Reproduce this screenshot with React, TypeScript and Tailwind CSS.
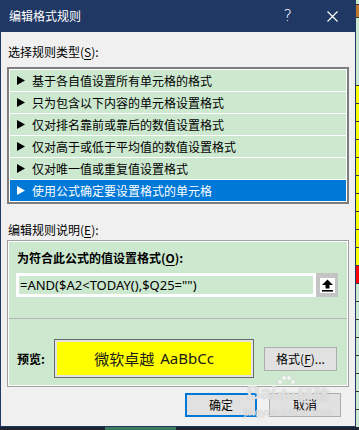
import React from 'react';

const rules = [
  '基于各自值设置所有单元格的格式',
  '只为包含以下内容的单元格设置格式',
  '仅对排名靠前或靠后的数值设置格式',
  '仅对高于或低于平均值的数值设置格式',
  '仅对唯一值或重复值设置格式',
  '使用公式确定要设置格式的单元格',
];

// sheet cells peeking out on the right edge
const cells = [
  { h: 5, c: 'bg-[#cce8cf]' },
  { h: 13, c: 'bg-[#c07a30]' },
  { h: 68, c: 'bg-[#cce8cf]' },
  ...Array.from({ length: 10 }, () => ({ h: 18, c: 'bg-[#ffff00]' })),
  { h: 18, c: 'bg-[#ff0000]' },
  ...Array.from({ length: 7 }, () => ({ h: 18, c: 'bg-[#cce8cf]' })),
];

const Arrow = ({ white }: { white?: boolean }) => (
  <svg width="8" height="9" viewBox="0 0 8 9" className="shrink-0">
    <polygon points="0,0 8,4.5 0,9" fill={white ? '#ffffff' : '#000000'} />
  </svg>
);

const UploadIcon = () => (
  <svg width="13" height="13" viewBox="0 0 13 13">
    <polygon points="6.5,0.5 1,6 4.5,6 4.5,9.5 8.5,9.5 8.5,6 12,6" fill="#000" />
    <rect x="1" y="11" width="11" height="1.6" fill="#000" />
  </svg>
);

const Dialog = () => (
  <div className="w-[356px] h-[427px] flex flex-col bg-[#f0f0f0] border-x border-b border-[#1f3864] text-[12px] text-black">
    <div className="h-[32px] shrink-0 -mx-px bg-[#1f3864] flex items-center pl-[9px] pr-[18px] text-white">
      <span className="leading-none">编辑格式规则</span>
      <span className="ml-auto mr-[35px] text-[16px] leading-none font-['DejaVu_Sans',sans-serif] font-light">?</span>
      <svg width="11" height="11" viewBox="0 0 11 11">
        <path d="M0.5 0.5 L10.5 10.5 M10.5 0.5 L0.5 10.5" stroke="#fff" strokeWidth="1.2" />
      </svg>
    </div>

    <div className="flex flex-col px-[6px] pt-[12px]">
      <div className="h-[16px] leading-[16px] pl-px">
        选择规则类型(<span className="underline underline-offset-2">S</span>):
      </div>

      <div className="mt-[7px] w-[342px] border-2 border-[#7d7d7d] bg-white p-px flex flex-col gap-px">
        {rules.map((r, i) => {
          const active = i === rules.length - 1;
          return (
            <div
              key={r}
              className={`h-[21px] flex items-center gap-[7px] pl-[7px] ${
                active ? 'bg-[#0078d7] text-white' : 'bg-[#cce8cf]'
              }`}
            >
              <Arrow white={active} />
              <span className="leading-none">{r}</span>
            </div>
          );
        })}
      </div>

      <div className="mt-[18px] h-[16px] leading-[16px] pl-px">
        编辑规则说明(<span className="underline underline-offset-2">E</span>):
      </div>

      <div className="mt-[2px] w-[342px] h-[147px] border border-[#a0a0a0]">
        <div className="h-full border border-white bg-[#cce8cf] flex flex-col">
          <div className="pt-[8px] pl-[8px] h-[24px] leading-[16px] font-bold">
            为符合此公式的值设置格式(<span className="underline underline-offset-2">O</span>):
          </div>
          <div className="mt-[7px] ml-[7px] flex h-[24px] w-[322px]">
            <div className="w-[300px] border-[3px] border-white bg-[#cce8cf] flex items-center pl-px font-['Noto_Sans',sans-serif] text-[13px] leading-none">
              =AND($A2&lt;TODAY(),$Q25="")
            </div>
            <div className="w-[22px] bg-[#c4c4c4] flex items-center justify-center">
              <div className="w-[15px] h-[15px] bg-white flex items-center justify-center">
                <UploadIcon />
              </div>
            </div>
          </div>
          <div className="mt-[21px] h-px bg-[#b4b4b4]" />
          <div className="mt-[20px] flex items-center pl-[8px]">
            <span className="w-[37px] font-bold">预览:</span>
            <div className="w-[200px] h-[39px] border border-[#6a6a6a] p-[2px] bg-[#e4e4e4]">
              <div className="h-full bg-[#ffff00] flex items-center justify-center gap-[6px] text-[15px] text-[#1a1a1a] leading-none">
                <span>微软卓越</span>
                <span className="font-['Noto_Sans',sans-serif]">AaBbCc</span>
              </div>
            </div>
            <div className="ml-[10px] w-[73px] h-[24px] border border-[#adadad] bg-[#e1e1e1] flex items-center justify-center">
              格式(<span className="underline underline-offset-2">F</span>)...
            </div>
          </div>
        </div>
      </div>

      <div className="mt-[6px] flex gap-[12px] pl-[178px]">
        <div className="w-[72px] h-[24px] border-2 border-[#0078d7] bg-[#e1e1e1] flex items-center justify-center">
          确定
        </div>
        <div className="w-[72px] h-[24px] border border-[#adadad] bg-[#e1e1e1] flex items-center justify-center">
          取消
        </div>
      </div>
    </div>
  </div>
);

// faint site watermark over the buttons
const Watermark = () => (
  <div className="absolute left-[242px] top-[376px] w-[92px] flex flex-col items-center text-white/60 [text-shadow:0_0_1px_#b0b0b0] pointer-events-none">
    <div className="flex items-end h-[26px]">
      <span className="text-[19px] font-bold leading-none font-['Liberation_Sans',sans-serif]">Bai</span>
      <div className="flex flex-col items-center">
        <svg width="20" height="12" viewBox="0 0 20 12" className="opacity-70">
          <circle cx="4" cy="7" r="2.5" fill="#fff" stroke="#bbb" strokeWidth="0.5" />
          <circle cx="8" cy="3" r="2.5" fill="#fff" stroke="#bbb" strokeWidth="0.5" />
          <circle cx="13" cy="3" r="2.5" fill="#fff" stroke="#bbb" strokeWidth="0.5" />
          <circle cx="17" cy="7" r="2.5" fill="#fff" stroke="#bbb" strokeWidth="0.5" />
        </svg>
        <span className="text-[15px] font-bold leading-none font-['Liberation_Sans',sans-serif]">du</span>
      </div>
      <span className="text-[16px] font-bold leading-none ml-px">经验</span>
    </div>
    <span className="mt-[5px] text-[11px] leading-none font-['Liberation_Sans',sans-serif]">jingyan.baidu.com</span>
  </div>
);

export default function App() {
  return (
    <div className="relative w-[359px] h-[430px] overflow-hidden bg-[#1c2333] font-['Noto_Sans_CJK_SC','Noto_Sans',sans-serif]">
      <div className="flex h-[427px]">
        <Dialog />
        <div className="w-[3px] flex flex-col bg-[#cce8cf]">
          {cells.map((c, i) => (
            <div key={i} style={{ height: c.h }} className={`shrink-0 border-b border-[#3a3a3a] ${c.c}`} />
          ))}
        </div>
      </div>
      <div className="h-[3px] flex">
        <div className="w-[105px]" />
        <div className="w-[71px] bg-[#3d7a5c]" />
      </div>
      <Watermark />
    </div>
  );
}
